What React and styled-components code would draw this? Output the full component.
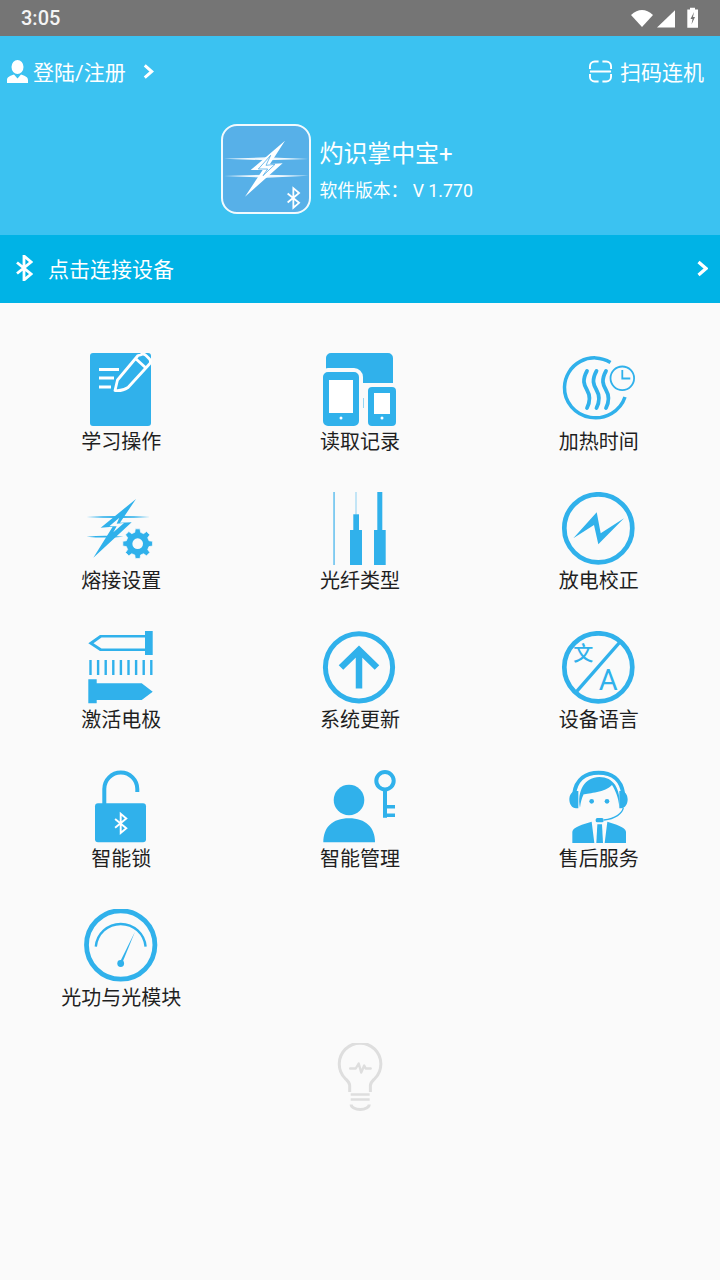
import React from "react";
import styled, { createGlobalStyle } from "styled-components";

const BLUE = "#30b1eb";
const BT_PATH = "M2 7.5 16 19 9 25V1l7 6L2 18.5";

const GlobalStyle = createGlobalStyle`
  html, body {
    margin: 0;
    padding: 0;
    background: #fafafa;
  }
  body {
    font-family: Roboto, "Noto Sans CJK SC", sans-serif;
  }
`;

const Page = styled.div`
  width: 720px;
  height: 1280px;
  overflow: hidden;
  background: #fafafa;
`;

const StatusBar = styled.div`
  height: 36px;
  background: #757575;
  display: flex;
  align-items: center;
  justify-content: space-between;
  padding: 0 22px 0 21px;
  color: #f4f4f4;
  font-size: 20px;
  font-weight: 500;
`;

const Header = styled.header`
  height: 199px;
  background: #3bc2f1;
  color: #fff;
`;

const TopRow = styled.div`
  height: 70px;
  padding: 0 16px 2px 7px;
  display: flex;
  align-items: center;
  justify-content: space-between;
  font-size: 21px;
`;

const TopLink = styled.div`
  display: flex;
  align-items: center;
  gap: ${(p) => p.$gap}px;
`;

const LinkArrow = styled.span`
  display: flex;
  margin-left: 12px;
`;

const AppInfo = styled.div`
  display: flex;
  justify-content: center;
  align-items: center;
  gap: 9px;
  margin-top: 16px;
`;

const AppText = styled.div`
  width: 180px;
  display: flex;
  flex-direction: column;
  gap: 8px;
  padding-top: 2px;
`;

const AppName = styled.div`
  font-size: 24px;
  line-height: 34px;
  letter-spacing: -0.1px;
`;

const AppVersion = styled.div`
  font-size: 17.75px;
  line-height: 24px;
  white-space: pre;
`;

const ConnectBar = styled.div`
  height: 66px;
  background: #00b3e6;
  color: #fff;
  display: flex;
  align-items: center;
  padding: 0 12px 2px 15px;
  font-size: 21px;
`;

const ConnectText = styled.span`
  margin-left: 15px;
  flex: 1;
`;

const Grid = styled.div`
  display: grid;
  grid-template-columns: repeat(3, 1fr);
  row-gap: 35px;
  padding: 50px 2px 0;
`;

const Tile = styled.div`
  display: flex;
  flex-direction: column;
  align-items: center;
`;

const TileIcon = styled.svg`
  display: block;
  width: 80px;
  height: 74px;
`;

const TileLabel = styled.div`
  font-size: 20px;
  line-height: 30px;
  color: #1f1f1f;
`;

const Bulb = styled.svg`
  display: block;
  margin: 30px auto 0;
  width: 50px;
  height: 70px;
`;

const PersonIcon = () => (
  <svg width="21" height="23" viewBox="0 0 21 23">
    <ellipse cx="10.5" cy="7" rx="6" ry="7" fill="#fff" />
    <path d="M0 23v-3c0-3 3-4 7-5.500l3.500 4 3.500-4c4 1.500 7 2.500 7 5.500v3z" fill="#fff" />
  </svg>
);

const Chevron = ({ w = 11, h = 15 }) => (
  <svg width={w} height={h} viewBox="0 0 11 16">
    <path d="M1.500 1.500 9 8l-7.500 6.500" fill="none" stroke="#fff" strokeWidth="3.200" />
  </svg>
);

const ScanIcon = () => (
  <svg width="23" height="23" viewBox="0 0 24 23" fill="none" stroke="#fff" strokeWidth="2">
    <path d="M10 1H6a5 5 0 0 0-5 5v3M14 1h4a5 5 0 0 1 5 5v3M10 22H6a5 5 0 0 1-5-5v-3M14 22h4a5 5 0 0 0 5-5v-3M1 11.500h22" />
  </svg>
);

const StatusIcons = () => (
  <svg width="68" height="22" viewBox="630 6 68 22">
    <path d="M631 14q11-10 22 0l-11 12z" fill="#fff" />
    <path d="M657 26.500h18V9.300z" fill="#fff" />
    <path d="M690 8.500V6.700h5v1.800h3v18.200h-10.700V8.500z" fill="#fff" />
    <path d="M694 11l-3.500 7h2l-1 5.500 3.500-7.500h-2z" fill="#757575" />
  </svg>
);

const LogoIcon = () => (
  <svg width="90" height="90" viewBox="663 372 270 270">
    <rect x="666" y="375" width="264" height="264" rx="45" fill="#57b0e8" stroke="#f2fafe" strokeWidth="6" />
    <path d="M672 476l128-4 125 5-125 4zM672 528l128-4 125 3-125 6z" fill="#fff" opacity=".9" />
    <path d="M855 422 752 510h36l-53 80 113-100-38 2z" fill="#fff" />
    <path d="M812 466 775 507h28l-14 20 36-34-27 3z" fill="#fff" stroke="#57b0e8" strokeWidth="2.500" />
    <g transform="translate(858 562) scale(2.45)">
      <path d={BT_PATH} fill="none" stroke="#fff" strokeWidth="2.200" />
    </g>
  </svg>
);

const StudyIcon = () => (
  <TileIcon viewBox="81 353 80 74">
    <rect x="90" y="353" width="61" height="73" rx="3" fill={BLUE} />
    <path d="M99 369.500h20M99 378h15M99 387h12" stroke="#fff" strokeWidth="2.800" fill="none" />
    <path
      d="M138 355.500 117.500 380l-2.500 10.500q7 1 13-3L149.500 364q2-2 0-5l-3.500-3.500q-3-2.500-5.500-.5zM135.500 358.500l11 10"
      fill="none"
      stroke="#fff"
      strokeWidth="2.800"
      strokeLinejoin="round"
    />
  </TileIcon>
);

const RecordIcon = () => (
  <TileIcon viewBox="320 353 80 74">
    <path d="M326 358a5 5 0 0 1 5-5h57a5 5 0 0 1 5 5v25h-30v5h-37z" fill={BLUE} />
    <rect x="363.500" y="398" width="2.500" height="10" fill={BLUE} />
    <rect x="321" y="370" width="40" height="58" rx="7" fill={BLUE} stroke="#fafafa" strokeWidth="4" />
    <rect x="329" y="380" width="24" height="33" fill="#fff" />
    <circle cx="341" cy="418" r="1.500" fill="#fff" />
    <rect x="366" y="385" width="32" height="43" rx="6" fill={BLUE} stroke="#fafafa" strokeWidth="4" />
    <rect x="374" y="393" width="16" height="21" fill="#fff" />
    <circle cx="382" cy="418" r="1.500" fill="#fff" />
  </TileIcon>
);

const HeatIcon = () => (
  <TileIcon viewBox="559 353 80 74" fill="none" stroke={BLUE}>
    <path d="M610.500 362.500A30 30 0 0 0 564.500 387A31 30 0 0 0 625 397" strokeWidth="3.500" />
    <path
      d="M587 371C582 380 584 385 587 390S591 400 587 408M596.500 371C591.500 380 593.500 385 596.500 390S600.500 400 596.500 408M606 371C601 380 603 385 606 390S610 400 606 408"
      strokeWidth="3.800"
      strokeLinecap="round"
    />
    <circle cx="622.300" cy="378.300" r="11.800" strokeWidth="1.800" />
    <path d="M622.300 370v8.500h8" strokeWidth="1.800" />
  </TileIcon>
);

// eight toothed gear around (cx, cy)
const gearPath = (cx, cy, outer, inner, teeth = 8) => {
  const pts = [];
  const step = (Math.PI * 2) / teeth;
  for (let i = 0; i < teeth; i++) {
    const a = i * step;
    [
      [a - step * 0.2, outer],
      [a + step * 0.2, outer],
      [a + step * 0.32, inner],
      [a + step * 0.68, inner],
    ].forEach(([t, r]) => pts.push(`${(cx + r * Math.cos(t)).toFixed(1)} ${(cy + r * Math.sin(t)).toFixed(1)}`));
  }
  return `M${pts.join("L")}Z`;
};

const WeldIcon = () => (
  <TileIcon viewBox="63 21 240 222">
    <path d="M80 96q95-6 190 0-95 6-190 0zM80 155q55-5 110 0-55 5-110 0z" fill={BLUE} />
    <path d="M228 42 122 128l36-3-58 93 115-106-35 1z" fill={BLUE} />
    <path d="M178 98 148 124h22l-10 18 32-28-22 2z" fill="#fafafa" />
    <path d={gearPath(233, 176, 45, 35)} fill={BLUE} stroke="#fafafa" strokeWidth="2" />
    <circle cx="233" cy="176" r="16" fill="#fafafa" />
  </TileIcon>
);

const FiberIcon = () => (
  <TileIcon viewBox="320 492 80 74" fill={BLUE}>
    <rect x="333.300" y="491.700" width="1.500" height="73.300" fill="#62bfee" />
    <rect x="355.500" y="491.700" width="1" height="23" fill="#8bd0f2" />
    <rect x="353.300" y="514.300" width="5.700" height="16" />
    <rect x="350" y="530" width="12" height="35" />
    <rect x="377.300" y="492" width="5" height="38" />
    <rect x="374" y="530" width="11.700" height="35" />
  </TileIcon>
);

const DischargeIcon = () => (
  <TileIcon viewBox="559 492 80 74">
    <circle cx="598.300" cy="528.300" r="34" fill="none" stroke={BLUE} strokeWidth="4.700" />
    <path d="M573.300 538.300 596.700 512.300l4 21 23.300-15-25.700 26-4.300-19.300z" fill={BLUE} />
  </TileIcon>
);

const ElectrodeIcon = () => (
  <TileIcon viewBox="81 631 80 74" fill={BLUE}>
    <path
      fillRule="evenodd"
      d="M88.300 643.300 100 635h45v-4h7.700v24H145v-4h-45zM93.500 643.300l8 5.200h43.500v-11h-43.500z"
    />
    {[0, 1, 2, 3, 4, 5, 6, 7, 8].map((i) => (
      <rect key={i} x={89.3 + i * 7.6} y="660" width="2.400" height="15" />
    ))}
    <path d="M88.300 679.300h8.400v4h45l11 8.400-11 8.300h-45v3.300h-8.400z" />
  </TileIcon>
);

const UpdateIcon = () => (
  <TileIcon viewBox="320 631 80 74" fill="none" stroke={BLUE}>
    <circle cx="359" cy="667.300" r="33.600" strokeWidth="5" />
    <path d="M341 667.500 359 650l18 17.500M359 651v37.500" strokeWidth="6.500" />
  </TileIcon>
);

const LanguageIcon = () => (
  <TileIcon viewBox="559 631 80 74">
    <circle cx="598.300" cy="667.300" r="34" fill="none" stroke={BLUE} strokeWidth="4.700" />
    <path d="M621.700 640 575 693.300" stroke={BLUE} strokeWidth="3.400" />
    <text x="583.300" y="661" textAnchor="middle" fontSize="20" fontWeight="500" fill={BLUE} fontFamily="'Noto Sans CJK SC', sans-serif">
      文
    </text>
    <text x="608.300" y="690" textAnchor="middle" fontSize="29" fill={BLUE} fontFamily="Roboto, sans-serif">
      A
    </text>
  </TileIcon>
);

const LockIcon = () => (
  <TileIcon viewBox="81 770 80 74">
    <path d="M104.300 804v-15a16.500 16.500 0 0 1 33 0v3" fill="none" stroke={BLUE} strokeWidth="4" />
    <rect x="95" y="803.300" width="51" height="39" rx="3" fill={BLUE} />
    <g transform="translate(113.500 813) scale(.8)">
      <path d={BT_PATH} fill="none" stroke="#fff" strokeWidth="2.400" />
    </g>
  </TileIcon>
);

const ManageIcon = () => (
  <TileIcon viewBox="320 770 80 74" fill={BLUE}>
    <circle cx="349" cy="800" r="15.300" />
    <path d="M323.300 842.300c0-15 9-24 25.700-24s26 9 26 24z" />
    <circle cx="385" cy="780.700" r="8.700" fill="none" stroke={BLUE} strokeWidth="4" />
    <path d="M383 788h4v29.700h-4zM387 805h8v3.500h-8zM387 813.500h8v3.500h-8z" />
  </TileIcon>
);

const ServiceIcon = () => (
  <TileIcon viewBox="57 12 240 222" fill={BLUE}>
    <path d="M102 85C108 38 140 20 176 20s68 18 74 65" fill="none" stroke={BLUE} strokeWidth="12" />
    <path d="M120 125c-10-50 15-92 58-92 42 0 65 35 60 90-3-30-12-50-22-66-20 22-70 25-85 28-6 12-9 24-11 40z" />
    <path d="M88 100c0-14 8-25 20-25h7v52h-7c-12 0-20-13-20-27zM263 100c0-14-8-25-20-25h-5v52h5c12 0 20-13 20-27z" />
    <path d="M250 125c-3 18-25 33-58 37" fill="none" stroke={BLUE} strokeWidth="4" />
    <rect x="167" y="156" width="24" height="13" rx="5" />
    <circle cx="155" cy="106" r="7" />
    <circle cx="201" cy="106" r="7" />
    <path d="M97 231v-34c2-14 32-22 58-30l8 64zM258 231v-34c-2-14-32-22-56-30l-8 64z" />
    <path d="M172 175h14l3 56h-20z" />
  </TileIcon>
);

const GaugeIcon = () => (
  <TileIcon viewBox="81 909 80 74">
    <circle cx="120.700" cy="945" r="34.200" fill="none" stroke={BLUE} strokeWidth="4.800" />
    <path d="M95.800 946.700a25 25 0 0 1 49.800 0" fill="none" stroke={BLUE} strokeWidth="2.400" />
    <path d="M119.700 962.500 135 931.700l-13.300 32.600z" fill={BLUE} />
    <circle cx="120.700" cy="963.500" r="3.400" fill={BLUE} />
  </TileIcon>
);

const BulbIcon = () => (
  <Bulb viewBox="334.300 1043 50 70" fill="none" stroke="#dedede">
    <path
      d="M349 1092v-6.500c0-3-2-4.500-4.500-7a20.800 20.800 0 1 1 29.700 0c-2.500 2.500-4.500 4-4.500 7v6.500"
      strokeWidth="3"
    />
    <path d="M350 1094.500h19M350 1099.500h19" strokeWidth="2.500" />
    <path d="M350.500 1104.500a9 5 0 0 0 18 0" strokeWidth="3" />
    <path d="M349.500 1068.500h5.500l3-5 2.500 9 3-7 1.500 3h5" strokeWidth="2.400" strokeLinejoin="round" strokeLinecap="round" />
  </Bulb>
);

const TILES = [
  { label: "学习操作", Icon: StudyIcon },
  { label: "读取记录", Icon: RecordIcon },
  { label: "加热时间", Icon: HeatIcon },
  { label: "熔接设置", Icon: WeldIcon },
  { label: "光纤类型", Icon: FiberIcon },
  { label: "放电校正", Icon: DischargeIcon },
  { label: "激活电极", Icon: ElectrodeIcon },
  { label: "系统更新", Icon: UpdateIcon },
  { label: "设备语言", Icon: LanguageIcon },
  { label: "智能锁", Icon: LockIcon },
  { label: "智能管理", Icon: ManageIcon },
  { label: "售后服务", Icon: ServiceIcon },
  { label: "光功与光模块", Icon: GaugeIcon },
];

export default function App() {
  return (
    <Page>
      <GlobalStyle />
      <StatusBar>
        <span>3:05</span>
        <StatusIcons />
      </StatusBar>
      <Header>
        <TopRow>
          <TopLink $gap={5}>
            <PersonIcon />
            <span>登陆/注册</span>
            <LinkArrow>
              <Chevron />
            </LinkArrow>
          </TopLink>
          <TopLink $gap={8}>
            <ScanIcon />
            <span>扫码连机</span>
          </TopLink>
        </TopRow>
        <AppInfo>
          <LogoIcon />
          <AppText>
            <AppName>灼识掌中宝+</AppName>
            <AppVersion>软件版本： V 1.770</AppVersion>
          </AppText>
        </AppInfo>
      </Header>
      <ConnectBar>
        <svg width="18" height="26" viewBox="0 0 18 26">
          <path d={BT_PATH} fill="none" stroke="#fff" strokeWidth="2.800" />
        </svg>
        <ConnectText>点击连接设备</ConnectText>
        <Chevron w={11} h={17} />
      </ConnectBar>
      <Grid>
        {TILES.map(({ label, Icon }) => (
          <Tile key={label}>
            <Icon />
            <TileLabel>{label}</TileLabel>
          </Tile>
        ))}
      </Grid>
      <BulbIcon />
    </Page>
  );
}
